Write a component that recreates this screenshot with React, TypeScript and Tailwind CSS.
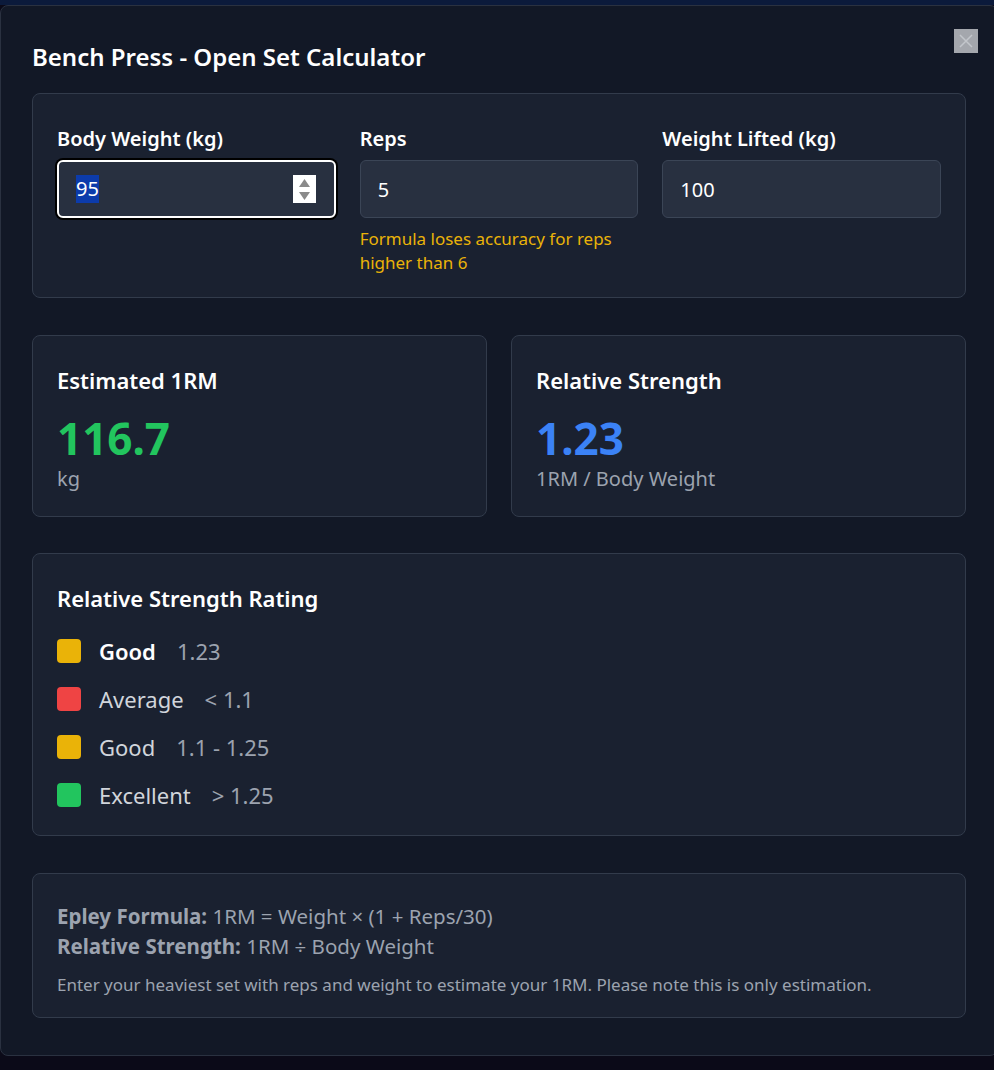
import React from 'react';

const ratings = [
  { label: 'Average', range: '< 1.1', color: 'bg-[#ef4444]' },
  { label: 'Good', range: '1.1 - 1.25', color: 'bg-[#eab308]' },
  { label: 'Excellent', range: '> 1.25', color: 'bg-[#22c55e]' },
];

const Spinner = () => (
  <div className="flex h-[28px] w-[23px] flex-col items-center justify-center gap-[3px] bg-white">
    <svg width="15" height="11" viewBox="0 0 15 11">
      <path d="M2 10 L7.5 2 L13 10 Z" fill="#8a8a8a" />
    </svg>
    <svg width="15" height="11" viewBox="0 0 15 11">
      <path d="M2 1 L7.5 9 L13 1 Z" fill="#8a8a8a" />
    </svg>
  </div>
);

const App = () => {
  return (
    <div
      className="min-h-[1070px] bg-[#0b0a18]"
      style={{ fontFamily: '"Noto Sans", "Open Sans", sans-serif' }}
    >
      <div className="h-[5px] bg-[#0b1a3b]" />
      <div className="w-[998px] rounded-lg border border-[#2a3140] bg-[#121826] px-[31px] pb-[37px] pt-[32px]">
        <div className="mb-[20px] flex items-start justify-between">
          <h2 className="mt-[3px] text-[24px] font-semibold leading-8 text-white">
            Bench Press - Open Set Calculator
          </h2>
          <button className="mr-[-12px] mt-[-9px] flex h-6 w-6 items-center justify-center bg-[#a4a7ad]">
            <svg width="16" height="16" viewBox="0 0 16 16">
              <path d="M2 2 L14 14 M14 2 L2 14" stroke="#c3c6cb" strokeWidth="1.5" />
            </svg>
          </button>
        </div>

        <div className="rounded-lg border border-[#323b4b] bg-[#1a2130] px-6 pb-[22px] pt-[31px]">
          <div className="grid grid-cols-3 gap-6">
            <div>
              <label className="block text-[20px] font-semibold leading-7 text-white">
                Body Weight (kg)
              </label>
              <div className="mt-[7px] flex h-[58px] items-center justify-between rounded-md border-2 border-white bg-[#283040] pl-[17px] pr-[18px] text-[20px] text-white shadow-[0_0_0_2px_#000]">
                <span className="bg-[#0c3bab] leading-7">95</span>
                <Spinner />
              </div>
            </div>
            <div>
              <label className="block text-[20px] font-semibold leading-7 text-white">Reps</label>
              <input
                readOnly
                value="5"
                className="mt-[7px] block h-[58px] w-full rounded-md border border-[#3b4556] bg-[#283040] px-[17px] text-[20px] text-white outline-none"
              />
              <p className="mt-[9px] text-[17px] leading-6 text-[#eab308]">
                Formula loses accuracy for reps higher than 6
              </p>
            </div>
            <div>
              <label className="block text-[20px] font-semibold leading-7 text-white">
                Weight Lifted (kg)
              </label>
              <input
                readOnly
                value="100"
                className="mt-[7px] block h-[58px] w-full rounded-md border border-[#3b4556] bg-[#283040] px-[17px] text-[20px] text-white outline-none"
              />
            </div>
          </div>
        </div>

        <div className="mt-[37px] grid grid-cols-2 gap-6">
          <div className="h-[182px] rounded-lg border border-[#323b4b] bg-[#1a2130] px-6 pt-[30px]">
            <h3 className="text-[22px] font-semibold leading-7 text-white">Estimated 1RM</h3>
            <div className="mt-[21px] text-[44px] font-bold leading-[46px] text-[#22c55e]">116.7</div>
            <div className="mt-[6px] text-[20px] leading-6 text-[#9ca3af]">kg</div>
          </div>
          <div className="h-[182px] rounded-lg border border-[#323b4b] bg-[#1a2130] px-6 pt-[30px]">
            <h3 className="text-[22px] font-semibold leading-7 text-white">Relative Strength</h3>
            <div className="mt-[21px] text-[44px] font-bold leading-[46px] text-[#3b82f6]">1.23</div>
            <div className="mt-[6px] text-[20px] leading-6 text-[#9ca3af]">1RM / Body Weight</div>
          </div>
        </div>

        <div className="mt-[36px] rounded-lg border border-[#323b4b] bg-[#1a2130] px-6 pb-[16px] pt-[30px]">
          <h3 className="text-[22px] font-semibold leading-7 text-white">Relative Strength Rating</h3>
          <div className="mt-[15px] flex h-[48px] items-center">
            <span className="h-6 w-6 rounded-[4px] bg-[#eab308]" />
            <span className="ml-[18px] text-[22px] font-semibold text-white">Good</span>
            <span className="ml-[21px] text-[22px] text-[#9ca3af]">1.23</span>
          </div>
          {ratings.map((r) => (
            <div key={r.label} className="flex h-[48px] items-center">
              <span className={`h-6 w-6 rounded-[4px] ${r.color}`} />
              <span className="ml-[18px] text-[22px] text-[#d1d5db]">{r.label}</span>
              <span className="ml-[21px] text-[22px] text-[#9ca3af]">{r.range}</span>
            </div>
          ))}
        </div>

        <div className="mt-[37px] rounded-lg border border-[#323b4b] bg-[#1a2130] px-6 pb-[20px] pt-[27px] text-[#9ca3af]">
          <p className="text-[20.5px] leading-[30px]">
            <span className="font-bold">Epley Formula:</span> 1RM = Weight × (1 + Reps/30)
          </p>
          <p className="text-[20.5px] leading-[30px]">
            <span className="font-bold">Relative Strength:</span> 1RM ÷ Body Weight
          </p>
          <p className="mt-[12px] text-[17px] leading-6">
            Enter your heaviest set with reps and weight to estimate your 1RM. Please note this is only estimation.
          </p>
        </div>
      </div>
    </div>
  );
};

export default App;
